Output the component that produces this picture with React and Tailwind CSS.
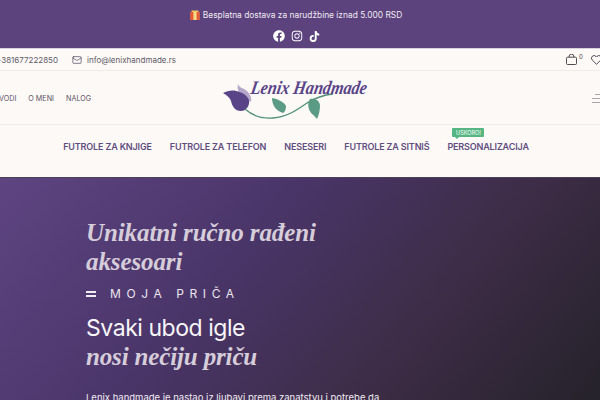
import { Mail } from 'lucide-react'
import { FaFacebook, FaInstagram, FaTiktok } from 'react-icons/fa'

const navItems = ['FUTROLE ZA KNJIGE', 'FUTROLE ZA TELEFON', 'NESESERI', 'FUTROLE ZA SITNIŠ', 'PERSONALIZACIJA']

export default function App() {
  return (
    <div className="w-[600px] h-[400px] overflow-hidden bg-[#fdf9f6] font-['Inter',sans-serif]">
      {/* Promo bar */}
      <div className="h-[48px] bg-[#5c437d] flex flex-col items-center pt-[8px] pr-[8px] text-white">
        <div className="flex items-center gap-[3px] h-[14px] text-[8.4px] text-[#f0e9f3]">
          <GiftIcon />
          <span>Besplatna dostava za narudžbine iznad 5.000 RSD</span>
        </div>
        <div className="flex items-center gap-[6px] mt-[8px] text-[12px]">
          <FaFacebook />
          <FaInstagram />
          <FaTiktok className="text-[11px]" />
        </div>
      </div>
      <div className="h-px bg-[#d8d0de]" />

      {/* Contact row */}
      <div className="h-[22px] flex items-center justify-between border-b border-[#f0ebe8] overflow-hidden">
        <div className="flex items-center -ml-[4px] text-[8px] text-[#5f5a68]">
          <span>+381677222850</span>
          <Mail size={10} strokeWidth={1.7} className="ml-[14px] mr-[5px] text-[#4f4560]" />
          <span>info@lenixhandmade.rs</span>
        </div>
        <div className="flex items-center -mr-[2px] text-[#3e3a42]">
          <BagIcon />
          <span className="text-[6px] -mt-[7px] ml-[2px] w-[7px]">0</span>
          <HeartIcon />
        </div>
      </div>

      {/* Logo row */}
      <div className="h-[54px] flex items-center justify-between border-b border-[#f0ebe8]">
        <div className="flex items-center gap-[12px] -ml-[1px] pt-[3px] text-[7.2px] text-[#5e5468] w-[110px]">
          <span>VODI</span>
          <span>O MENI</span>
          <span>NALOG</span>
        </div>
        <Logo />
        <div className="flex flex-col items-end gap-[3px] w-[110px] -mr-[1px] pt-[2px]">
          <div className="w-[6px] h-px bg-[#a9a5a8]" />
          <div className="w-[9px] h-px bg-[#a9a5a8]" />
          <div className="w-[9px] h-px bg-[#a9a5a8]" />
        </div>
      </div>

      {/* Main nav */}
      <div className="h-[52px] flex justify-center gap-[18px] pt-[16px] pr-[8px] text-[9px] font-semibold tracking-[-0.15px] text-[#5f4d80]">
        {navItems.map((item) => (
          <div key={item} className="relative h-[12px] leading-[12px] whitespace-nowrap">
            {item}
            {item === 'PERSONALIZACIJA' && (
              <span className="absolute -top-[13px] left-[5px] h-[9px] w-[32px] flex items-center justify-center rounded-[1px] bg-[#55b683] text-[5.5px] font-normal tracking-normal text-white">
                USKORO!
                <span className="absolute -bottom-[2px] left-[3px] w-0 h-0 border-l-[2px] border-r-[2px] border-t-[2px] border-l-transparent border-r-transparent border-t-[#55b683]" />
              </span>
            )}
          </div>
        ))}
      </div>

      {/* Hero */}
      <div className="h-[224px] bg-[linear-gradient(130deg,#5e4582_0%,#4a3569_38%,#3e2d48_68%,#25222a_100%)] border-t border-[#4b4257] pl-[86px] pt-[40px]">
        <h1 className="font-['Liberation_Serif',serif] italic font-bold text-[25px] leading-[29px] text-[#d6cdda] w-[260px] tracking-[-0.1px]">
          Unikatni ručno rađeni aksesoari
        </h1>
        <div className="flex items-center mt-[11px] h-[14px]">
          <div className="w-[10px] flex flex-col gap-[2px]">
            <div className="h-[2px] bg-[#f1ecf3]" />
            <div className="h-[2px] bg-[#f1ecf3]" />
          </div>
          <span className="ml-[14px] text-[12px] tracking-[5.6px] text-[#ebe5ee]">MOJA PRIČA</span>
        </div>
        <h2 className="mt-[13px] text-[23px] leading-[29px] text-[#f8f5f8] tracking-[-0.45px]">Svaki ubod igle</h2>
        <div className="-mt-[1px] font-['Liberation_Serif',serif] italic font-bold text-[25px] leading-[29px] text-[#d6cdda] tracking-[-0.15px]">
          nosi nečiju priču
        </div>
        <p className="mt-[20px] text-[9.5px] leading-[14px] whitespace-nowrap text-[#f1ecf3]">
          Lenix handmade je nastao iz ljubavi prema zanatstvu i potrebe da
        </p>
      </div>
    </div>
  )
}

function GiftIcon() {
  return (
    <svg width="10" height="10" viewBox="0 0 10 10">
      <rect x="0.5" y="2" width="9" height="8" fill="#f0a63c" />
      <rect x="0.5" y="2" width="3" height="8" fill="#e8563a" />
      <rect x="6.5" y="2" width="3" height="8" fill="#e8563a" />
      <rect x="3.5" y="2" width="3" height="8" fill="#f5d98a" />
      <rect x="1.5" y="0.5" width="7" height="1.5" fill="#f7c65a" />
    </svg>
  )
}

function BagIcon() {
  return (
    <svg width="11" height="11" viewBox="0 0 11 11" fill="none" stroke="currentColor" strokeWidth="0.9">
      <rect x="0.5" y="3.2" width="10" height="7.3" rx="1" />
      <path d="M3.2 3.2V2a2.2 1.6 0 0 1 4.6 0v1.2" />
    </svg>
  )
}

function HeartIcon() {
  return (
    <svg width="11" height="10" viewBox="0 0 11 10" fill="none" stroke="currentColor" strokeWidth="0.9" className="ml-[5px]">
      <path d="M5.5 9.3 1.2 5A2.6 2.6 0 0 1 5 1.4l.5.6.5-.6A2.6 2.6 0 0 1 9.8 5z" />
    </svg>
  )
}

function Logo() {
  return (
    <svg width="146" height="44" viewBox="0 0 146 44" className="mt-[2px] -ml-[8px]">
      {/* tulip */}
      <path d="M15 7c1 4 6 4 9 7 3 3 5 7 4 11l-11-8c-2-3-3-6-2-10z" fill="#b5a7c9" />
      <path d="M0 16c4-2 9-3 13-2 6 1 11 4 13 9 1 6-3 11-8 11-6 0-9-5-10-10-1-3-4-6-8-8z" fill="#5a4488" />
      {/* stem */}
      <path d="M22 32c8 7 18 10 28 9 14-1 24-8 34-15 8-5 16-8 26-9" fill="none" stroke="#4f8f79" strokeWidth="1.3" />
      {/* leaves */}
      <path d="M49 21c6 1 12 4 14 8 0 3-1 6-3 7-7-2-11-8-11-15z" fill="#5b9b86" />
      <path d="M87 22c5-1 9 1 10 6 0 5-1 10-3 14-2-2-3-4-5-5-4-4-5-11-2-15z" fill="#5b9b86" />
      <text x="30" y="17" fontFamily="Liberation Serif" fontStyle="italic" fontWeight="700" fontSize="19" fill="#5a4488" textLength="116" lengthAdjust="spacingAndGlyphs" transform="skewX(-10)">
        Lenix Handmade
      </text>
    </svg>
  )
}
